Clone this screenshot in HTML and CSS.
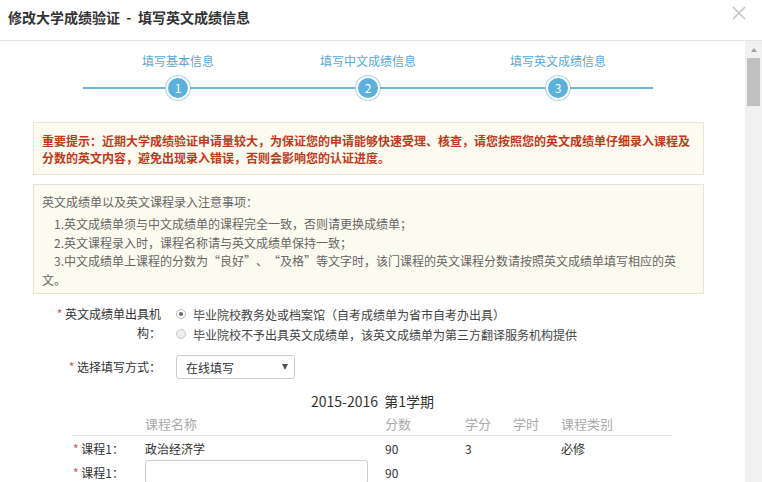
FILE: index.html
```
<!DOCTYPE html>
<html lang="zh-CN">
<head>
<meta charset="utf-8">
<title>修改大学成绩验证</title>
<link rel="stylesheet" href="styles.css">
</head>
<body>
<div class="header">
  <div class="title">修改大学成绩验证&nbsp;&nbsp;-&nbsp;&nbsp;填写英文成绩信息</div>
  <svg class="close" viewBox="0 0 14 14"><path d="M1 1L13 13M13 1L1 13" stroke="#c4c4c4" stroke-width="1.6" fill="none"/></svg>
</div>
<div class="main">
  <div class="content">
    <div class="steps">
      <div class="step">
        <div class="step-label">填写基本信息</div>
        <div class="track"><div class="seg"></div><div class="dot">1</div><div class="seg"></div></div>
      </div>
      <div class="step">
        <div class="step-label">填写中文成绩信息</div>
        <div class="track"><div class="seg"></div><div class="dot">2</div><div class="seg"></div></div>
      </div>
      <div class="step">
        <div class="step-label">填写英文成绩信息</div>
        <div class="track"><div class="seg"></div><div class="dot">3</div><div class="seg"></div></div>
      </div>
    </div>

    <div class="notice">重要提示：近期大学成绩验证申请量较大，为保证您的申请能够快速受理、核查，请您按照您的英文成绩单仔细录入课程及分数的英文内容，避免出现录入错误，否则会影响您的认证进度。</div>

    <div class="tips">
      <div class="tips-head">英文成绩单以及英文课程录入注意事项：</div>
      <div class="tip">1.英文成绩单须与中文成绩单的课程完全一致，否则请更换成绩单；</div>
      <div class="tip">2.英文课程录入时，课程名称请与英文成绩单保持一致；</div>
      <div class="tip">3.中文成绩单上课程的分数为“良好”、“及格”等文字时，该门课程的英文课程分数请按照英文成绩单填写相应的英文。</div>
    </div>

    <div class="form">
      <div class="frow">
        <div class="flabel"><span class="req">*</span> 英文成绩单出具机构：</div>
        <div class="fcontrol">
          <div class="radio-item"><span class="radio checked"></span>毕业院校教务处或档案馆（自考成绩单为省市自考办出具）</div>
          <div class="radio-item"><span class="radio"></span>毕业院校不予出具英文成绩单，该英文成绩单为第三方翻译服务机构提供</div>
        </div>
      </div>
      <div class="frow frow-select">
        <div class="flabel flabel-mid"><span class="req">*</span> 选择填写方式：</div>
        <div class="fcontrol">
          <div class="select"><span>在线填写</span><span class="caret"></span></div>
        </div>
      </div>
    </div>

    <div class="semester">2015-2016&nbsp;&nbsp;第1学期</div>

    <div class="table">
      <div class="trow thead">
        <div></div><div>课程名称</div><div>分数</div><div>学分</div><div>学时</div><div>课程类别</div>
      </div>
      <div class="trow">
        <div class="clabel"><span class="req">*</span> 课程1：</div><div>政治经济学</div><div>90</div><div>3</div><div></div><div>必修</div>
      </div>
      <div class="trow">
        <div class="clabel"><span class="req">*</span> 课程1：</div><div><div class="input"></div></div><div>90</div><div></div><div></div><div></div>
      </div>
    </div>
  </div>
  <div class="scrollbar">
    <div class="sb-btn"><span class="sb-arrow"></span></div>
    <div class="sb-thumb"></div>
  </div>
</div>
</body>
</html>
```
FILE: styles.css
```
* { box-sizing: border-box; }
html, body { margin: 0; padding: 0; }
body {
  width: 762px;
  height: 482px;
  overflow: hidden;
  background: #fff;
  color: #333;
  font-family: "Noto Sans CJK SC", "Microsoft YaHei", sans-serif;
  font-size: 12px;
  text-spacing-trim: space-all;
}

.header {
  height: 41px;
  border-bottom: 1px solid #e5e5e5;
  display: flex;
  justify-content: space-between;
  align-items: flex-start;
  padding: 0 16px 0 8px;
}
.title {
  font-size: 14px;
  font-weight: bold;
  line-height: 34px;
  color: #333;
}
.close {
  width: 14px;
  height: 14px;
  margin-top: 6px;
}

.main {
  display: flex;
  height: 441px;
}
.content {
  width: 745px;
  overflow: hidden;
}

.scrollbar {
  width: 17px;
  background: #f1f1f1;
  display: flex;
  flex-direction: column;
  align-items: center;
}
.sb-btn {
  height: 17px;
  width: 17px;
  display: flex;
  align-items: center;
  justify-content: center;
}
.sb-arrow {
  width: 0;
  height: 0;
  border-left: 3.5px solid transparent;
  border-right: 3.5px solid transparent;
  border-bottom: 4px solid #a3a3a3;
}
.sb-thumb {
  width: 13px;
  height: 48px;
  background: #c1c1c1;
}

/* steps */
.steps {
  display: flex;
  width: 570px;
  margin-left: 83px;
  padding-top: 12px;
}
.step {
  width: 190px;
  display: flex;
  flex-direction: column;
}
.step-label {
  text-align: center;
  color: #5aa7d6;
  line-height: 16px;
  height: 16px;
}
.track {
  display: flex;
  align-items: center;
  height: 26px;
  margin-top: 6px;
}
.seg {
  flex: 1;
  height: 2px;
  background: #6cb5dc;
}
.dot {
  width: 24px;
  height: 24px;
  border-radius: 50%;
  background: #5bb0dc;
  border: 2px solid #fff;
  box-shadow: 0 0 0 1px #a7d3ea;
  color: #fff;
  text-align: center;
  line-height: 20px;
  font-size: 12px;
}

/* notices */
.notice {
  margin: 21px 41px 0 33px;
  border: 1px solid #ebe6d0;
  background: #fdfbf0;
  padding: 9px 8px 8px 8px;
  line-height: 17px;
  color: #c0391b;
  font-weight: bold;
}
.tips {
  margin: 9px 41px 0 33px;
  border: 1px solid #e6e4d2;
  background: #fcfbf0;
  padding: 7px 14px 4px 8px;
  color: #666;
}
.tips-head {
  line-height: 20px;
  margin-bottom: 3px;
}
.tip {
  line-height: 18.5px;
  text-indent: 12px;
}

/* form */
.form {
  padding-left: 51px;
  margin-top: 10px;
}
.frow {
  display: flex;
}
.frow-select {
  margin-top: 11px;
}
.flabel {
  width: 110px;
  text-align: right;
  line-height: 19px;
  color: #333;
}
.flabel-mid {
  line-height: 24px;
}
.req {
  color: #d9534f;
}
.fcontrol {
  margin-left: 15px;
}
.radio-item {
  display: flex;
  align-items: center;
  height: 20px;
  color: #444;
}
.radio {
  width: 10px;
  height: 10px;
  border-radius: 50%;
  border: 1px solid #c8c8c8;
  background: #eee;
  margin-right: 7px;
  display: flex;
  align-items: center;
  justify-content: center;
}
.radio.checked {
  background: #fff;
  border-color: #bbb;
}
.radio.checked::after {
  content: "";
  width: 4px;
  height: 4px;
  border-radius: 50%;
  background: #666;
}
.select {
  width: 119px;
  height: 24px;
  border: 1px solid #ccc;
  border-radius: 3px;
  display: flex;
  align-items: center;
  justify-content: space-between;
  padding: 0 6px 0 9px;
  color: #333;
}
.caret {
  width: 0;
  height: 0;
  border-left: 3.5px solid transparent;
  border-right: 3.5px solid transparent;
  border-top: 6px solid #555;
}

.semester {
  margin-top: 12px;
  text-align: center;
  font-size: 14px;
  line-height: 20px;
  color: #333;
}

/* table */
.table {
  margin-left: 72px;
  width: 600px;
}
.trow {
  display: grid;
  grid-template-columns: 73px 240px 80px 48px 48px 111px;
  align-items: center;
  height: 24px;
  color: #333;
}
.thead {
  height: 25px;
  border-bottom: 1px solid #e5e5e5;
  color: #aaa;
  font-size: 13px;
}
.clabel {
  padding-left: 1px;
}
.input {
  width: 223px;
  height: 24px;
  border: 1px solid #ccc;
  border-radius: 3px;
  background: #fff;
}
```
